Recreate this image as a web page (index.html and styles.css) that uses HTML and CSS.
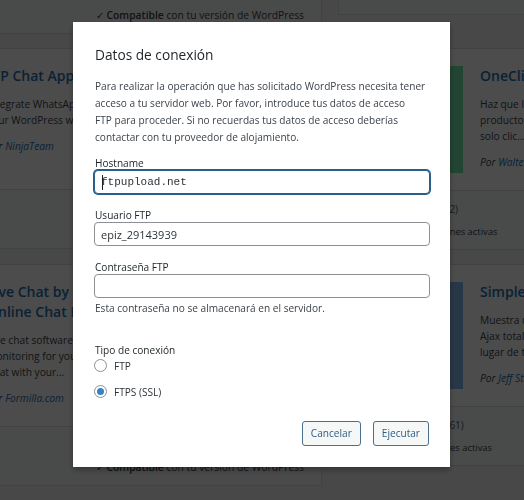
FILE: index.html
```html
<!DOCTYPE html>
<html lang="es">
<head>
<meta charset="utf-8">
<title>Datos de conexión</title>
<link rel="stylesheet" href="styles.css">
</head>
<body>
<div class="cards">
  <!-- row 1 -->
  <div class="card">
    <div class="card-top card-top--stub"></div>
    <div class="card-bottom">
      <div class="col-left">
        <div class="rating"><span class="stars">★★★★★</span> <span class="count">(14)</span></div>
        <div>Más de 10 instalaciones activas</div>
      </div>
      <div class="col-right">
        <div><strong>Última actualización:</strong> hace 2 semanas</div>
        <div><span class="check">✓</span> <strong>Compatible</strong> con tu versión de WordPress</div>
      </div>
    </div>
  </div>
  <div class="card">
    <div class="card-top card-top--stub-short"></div>
    <div class="card-bottom">
      <div class="col-left">
        <div class="rating"><span class="stars">★★★★★</span> <span class="count">(38)</span></div>
      </div>
      <div class="col-right">
        <div><strong>Última actualización:</strong> hace 1 mes</div>
        <div><span class="check">✓</span> <strong>Compatible</strong> con tu versión de WordPress</div>
      </div>
    </div>
  </div>

  <!-- row 2 -->
  <div class="card">
    <div class="card-top">
      <div class="thumb thumb--teal"></div>
      <div class="card-info">
        <h3 class="card-title">WP Chat App</h3>
        <p class="card-desc">Integrate WhatsApp experience directly into<br>your WordPress website.</p>
        <p class="card-author">Por <a href="#">NinjaTeam</a></p>
      </div>
    </div>
    <div class="card-bottom">
      <div class="col-left">
        <div class="rating"><span class="stars">★★★★★</span> <span class="count">(113)</span></div>
        <div>Más de 10 instalaciones activas</div>
      </div>
      <div class="col-right">
        <div><strong>Última actualización:</strong> hace 3 semanas</div>
        <div><span class="check">✓</span> <strong>Compatible</strong> con tu versión de WordPress</div>
      </div>
    </div>
  </div>
  <div class="card">
    <div class="card-top">
      <div class="thumb thumb--green"></div>
      <div class="card-info">
        <h3 class="card-title">OneClick Chat to Order</h3>
        <p class="card-desc">Haz que los clientes compren tus<br>productos directamente por WhatsApp con un<br>solo clic...</p>
        <p class="card-author">Por <a href="#">Walter Pinem</a></p>
      </div>
    </div>
    <div class="card-bottom">
      <div class="col-left">
        <div class="rating"><span class="stars">★★★★★</span> <span class="count">(2)</span></div>
        <div>Más de 100 instalaciones activas</div>
      </div>
      <div class="col-right">
        <div><strong>Última actualización:</strong> hace 1 mes</div>
        <div><span class="check">✓</span> <strong>Compatible</strong> con tu versión de WordPress</div>
      </div>
    </div>
  </div>

  <!-- row 3 -->
  <div class="card">
    <div class="card-top">
      <div class="thumb thumb--blue"></div>
      <div class="card-info">
        <h3 class="card-title">Live Chat by Formilla.com – Free<br>Online Chat Plugin</h3>
        <p class="card-desc">Live chat software with real-time visitor<br>monitoring for your website. Live<br>Chat with your...</p>
        <p class="card-author">Por <a href="#">Formilla.com</a></p>
      </div>
    </div>
    <div class="card-bottom">
      <div class="col-left">
        <div class="rating"><span class="stars">★★★★★</span> <span class="count">(45)</span></div>
        <div>Más de 10 instalaciones activas</div>
      </div>
      <div class="col-right">
        <div><strong>Última actualización:</strong> hace 2 meses</div>
        <div><span class="check">✓</span> <strong>Compatible</strong> con tu versión de WordPress</div>
      </div>
    </div>
  </div>
  <div class="card">
    <div class="card-top">
      <div class="thumb thumb--slate"></div>
      <div class="card-info">
        <h3 class="card-title">Simple Ajax Chat</h3>
        <p class="card-desc">Muestra una caja de chat totalmente<br>Ajax totalmente personalizable en cualquier<br>lugar de tu sitio.</p>
        <p class="card-author">Por <a href="#">Jeff Starr</a></p>
      </div>
    </div>
    <div class="card-bottom">
      <div class="col-left">
        <div class="rating"><span class="stars">★★★★★</span> <span class="count">(61)</span></div>
        <div>Más de 10 instalaciones activas</div>
      </div>
      <div class="col-right">
        <div><strong>Última actualización:</strong> hace 4 semanas</div>
        <div><span class="check">✓</span> <strong>Compatible</strong> con tu versión de WordPress</div>
      </div>
    </div>
  </div>

  <!-- row 4 -->
  <div class="card">
    <div class="card-top">
      <div class="thumb thumb--teal"></div>
      <div class="card-info">
        <h3 class="card-title">Chat</h3>
      </div>
    </div>
  </div>
  <div class="card">
    <div class="card-top">
      <div class="thumb thumb--green"></div>
      <div class="card-info">
        <h3 class="card-title">Chat</h3>
      </div>
    </div>
  </div>
</div>

<div class="backdrop">
  <div class="dialog" role="dialog" aria-labelledby="dlg-title">
    <h1 class="dialog-title" id="dlg-title">Datos de conexión</h1>
    <p class="dialog-intro">Para realizar la operación que has solicitado WordPress necesita tener<br>acceso a tu servidor web. Por favor, introduce tus datos de acceso<br>FTP para proceder. Si no recuerdas tus datos de acceso deberías<br>contactar con tu proveedor de alojamiento.</p>

    <div class="field">
      <label class="field-label" for="hostname">Hostname</label>
      <div class="caret-wrap"><input id="hostname" class="text-input text-input--code text-input--focus" type="text" value="ftpupload.net"></div>
    </div>
    <div class="field">
      <label class="field-label" for="username">Usuario FTP</label>
      <input id="username" class="text-input" type="text" value="epiz_29143939">
    </div>
    <div class="field field--last">
      <label class="field-label" for="password">Contraseña FTP</label>
      <input id="password" class="text-input" type="password" value="">
      <p class="field-help">Esta contraseña no se almacenará en el servidor.</p>
    </div>

    <div class="conn-type">
      <div class="field-label">Tipo de conexión</div>
      <label class="radio-row"><input class="radio" type="radio" name="connection_type" value="ftp"> FTP</label>
      <label class="radio-row"><input class="radio" type="radio" name="connection_type" value="ftps" checked> FTPS (SSL)</label>
    </div>

    <div class="actions">
      <button class="btn" type="button">Cancelar</button>
      <button class="btn" type="button">Ejecutar</button>
    </div>
  </div>
</div>
</body>
</html>
```

FILE: styles.css
```css
* { box-sizing: border-box; }

html, body {
  margin: 0;
  height: 100%;
}

body {
  background: #f0f0f1;
  overflow: hidden;
  font-family: "Open Sans", "Noto Sans", sans-serif;
  color: #3c434a;
}

/* ---------- background plugin cards ---------- */
.cards {
  display: grid;
  grid-template-columns: 477px 477px;
  column-gap: 16px;
  row-gap: 14px;
  align-items: start;
  margin: -69px 0 0 -155px;
}

.card {
  background: #fff;
  border: 1px solid #dcdcde;
}

.card-top {
  display: flex;
  padding: 17px 17px 16px;
}

.card-top--stub { height: 42px; padding: 0; }
.card-top--stub-short { height: 24px; padding: 0; }

.thumb {
  flex: none;
  width: 107px;
  height: 107px;
  margin-right: 17px;
}
.thumb--teal { background: #6cc3a4; }
.thumb--green { background: #6fe6a8; }
.thumb--blue { background: #7fb0d8; }
.thumb--slate { background: #80b8e6; }

.card-info { flex: 1; min-width: 0; }

.card-title {
  margin: 0 0 10px;
  font-size: 14px;
  line-height: 20px;
  font-weight: 600;
  color: #2271b1;
  white-space: nowrap;
}

.card-desc {
  margin: 0 0 10px;
  font-size: 10.2px;
  line-height: 16px;
  white-space: nowrap;
}

.card-author {
  margin: 0 0 4px;
  font-size: 10.2px;
  line-height: 16px;
  font-style: italic;
}
.card-author a { color: #2271b1; text-decoration: none; }

.card-bottom {
  display: flex;
  justify-content: space-between;
  border-top: 1px solid #dcdcde;
  background: #f6f7f7;
  padding: 9px 17px 8px;
  font-size: 9.4px;
  line-height: 18px;
  white-space: nowrap;
}
.col-left > div:first-child,
.col-right > div:first-child { margin-bottom: 4px; }
.col-right { text-align: right; font-size: 10.3px; }
.col-right strong { font-weight: 600; }

.stars {
  display: inline-block;
  width: 88px;
  color: #dba617;
  font-size: 14px;
  letter-spacing: 3px;
  overflow: hidden;
  vertical-align: top;
}
.count { color: #50575e; font-size: 10px; }
.check { color: #3c434a; }

/* ---------- modal ---------- */
.backdrop {
  position: fixed;
  inset: 0;
  background: rgba(0, 0, 0, 0.7);
  padding: 22px 0 0 73px;
}

.dialog {
  width: 377px;
  background: #fff;
  padding: 23px 20px 21px 22px;
  box-shadow: 0 3px 6px rgba(0, 0, 0, 0.3);
  font-size: 10.1px;
  color: #3c434a;
}

.dialog-title {
  margin: 0 0 13.4px;
  font-size: 13.7px;
  line-height: 20px;
  font-weight: 400;
  color: #1d2327;
}

.dialog-intro {
  margin: 0 0 10.8px;
  line-height: 16.7px;
}

.field { margin-bottom: 14px; }
.field--last { margin-bottom: 0; }

.field-label {
  display: block;
  line-height: 14px;
  color: #1d2327;
}

.text-input {
  display: block;
  width: calc(100% + 1px);
  height: 24px;
  margin: 0 0 0 -1px;
  padding: 0 6px;
  border: 1px solid #8c8f94;
  border-radius: 4px;
  background: #fff;
  font-family: inherit;
  font-size: 11px;
  color: #2c3338;
  outline: none;
}

.text-input--code {
  font-family: "Liberation Mono", "DejaVu Sans Mono", monospace;
}

.text-input--focus {
  border-color: #285e8a;
  box-shadow: 0 0 0 1px #285e8a;
}

.caret-wrap { position: relative; }
.caret-wrap::after {
  content: "";
  position: absolute;
  left: 7px;
  top: 5px;
  width: 1px;
  height: 15px;
  background: #1d2327;
}

.field-help {
  margin: 2px 0 0;
  line-height: 16px;
}

.conn-type { margin-top: 26.7px; }

.radio-row {
  display: flex;
  align-items: center;
  gap: 7px;
  height: 18px;
  margin-left: -1px;
  color: #2c3338;
}
.radio-row + .radio-row { margin-top: 8px; }

.radio {
  appearance: none;
  -webkit-appearance: none;
  display: grid;
  place-items: center;
  flex: none;
  width: 13px;
  height: 13px;
  margin: 0;
  border: 1px solid #8c8f94;
  border-radius: 50%;
  background: #fff;
}
.radio:checked::before {
  content: "";
  width: 7px;
  height: 7px;
  border-radius: 50%;
  background: #3582c4;
}

.actions {
  display: flex;
  justify-content: flex-end;
  gap: 12px;
  margin: 20px 1px 0 0;
}

.btn {
  height: 25px;
  padding: 0 8px;
  border: 1px solid #4b6f8f;
  border-radius: 3px;
  background: #f6f7f7;
  color: #2f5d85;
  font-family: inherit;
  font-size: 10.1px;
  line-height: 23px;
}
```
